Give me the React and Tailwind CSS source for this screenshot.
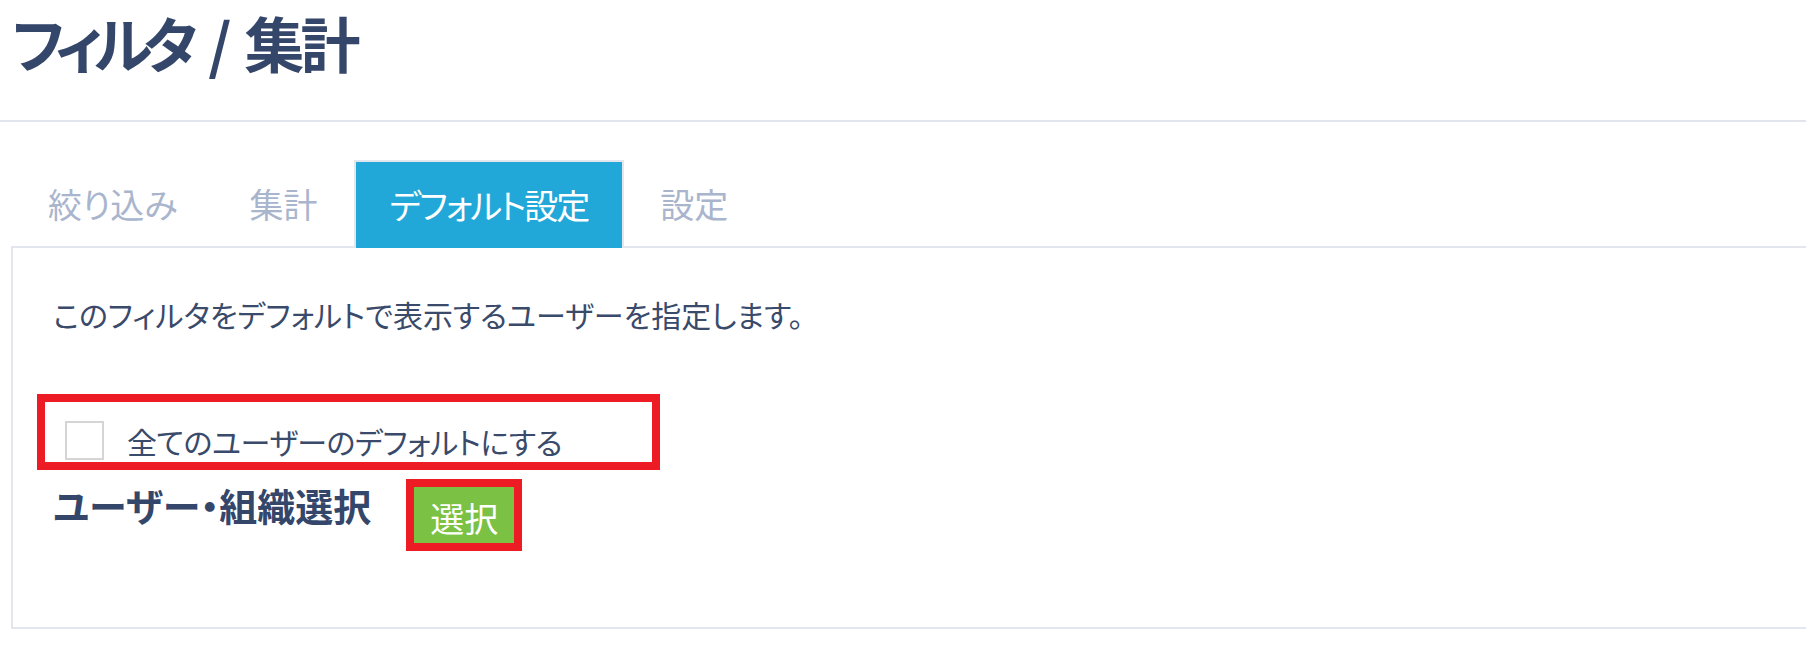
import React from 'react';

const font = "font-['Noto_Sans_CJK_JP','Noto_Sans',sans-serif] [font-feature-settings:'palt']";

const Tabs = () => {
  const tabs = ['絞り込み', '集計', 'デフォルト設定', '設定'];
  const active = 2;
  return (
    <div className="relative z-10 flex pl-[12px]">
      {tabs.map((t, i) =>
        i === active ? (
          <div key={t} className="flex h-[88px] items-center border-2 border-b-0 border-[#e2e6ee] bg-[#21a8d8] px-[34px] text-[34px] leading-none tracking-[-2px] text-white">
            {t}
          </div>
        ) : (
          <div key={t} className="flex h-[88px] items-center px-[36px] text-[34px] leading-none text-[#a9b5cd]">
            {t}
          </div>
        )
      )}
    </div>
  );
};

const App = () => {
  return (
    <div className={`min-h-screen w-full overflow-hidden bg-white ${font}`}>
      {/* Header */}
      <div className="h-[122px] border-b-2 border-[#e2e5ee] pl-[12px] pt-[6px]">
        <h1 className="flex items-baseline text-[60px] font-bold leading-[1.2] text-[#34466a]">
          <span className="pr-[9px] tracking-[-9px]">フィルタ</span>
          <span className="ml-[10px] mr-[13px]">/</span>
          <span className="pr-[4px] tracking-[-4px]">集計</span>
        </h1>
      </div>

      <div className="pt-[38px]">
        <Tabs />

        {/* Panel */}
        <div className="-mt-[2px] ml-[11px] border-y-2 border-l-2 border-[#e3e6ef] pb-[76px] pl-[24px] pt-[45px]">
          <p className="pl-[16px] text-[30px] leading-[1.4] text-[#3a4a6a]">
            このフィルタをデフォルトで表示するユーザーを指定します。
          </p>

          <div className="mt-[59px] flex h-[76px] w-[623px] items-end border-[8px] border-[#ed1c24] pb-[2px] pl-[20px]">
            <div className="flex items-center">
              <span className="block h-[39px] w-[39px] border-2 border-[#d5d5d5] bg-white" />
              <span className="ml-[23px] text-[30px] leading-none tracking-[-0.5px] text-[#3a4a6a]">全てのユーザーのデフォルトにする</span>
            </div>
          </div>

          <div className="mt-[9px] flex items-start pl-[16px]">
            <div className="mt-[7px] text-[38px] font-bold leading-none text-[#34466a]">ユーザー・組織選択</div>
            <div className="ml-[35px] border-[8px] border-[#ed1c24]">
              <button className="block h-[56px] w-[100px] bg-[#7bc143] pt-[5px] text-center text-[34px] leading-none text-white">
                選択
              </button>
            </div>
          </div>
        </div>
      </div>
    </div>
  );
};

export default App;
